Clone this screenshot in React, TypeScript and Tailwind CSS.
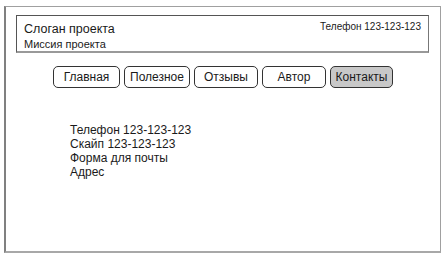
import React from 'react';

const menu = ['Главная', 'Полезное', 'Отзывы', 'Автор', 'Контакты'];
const widths = ['w-[67px]', 'w-[66px]', 'w-[64px]', 'w-[64px]', 'w-[63px]'];

export default function App() {
  return (
    <div className="w-[445px] h-[257px] bg-white pt-[6px] pl-[4px] font-['Liberation_Sans',Arial,sans-serif] text-[#1a1a1a]">
      {/* внешняя рамка страницы */}
      <div className="w-[437px] h-[247px] border-t border-r border-t-[#a0a0a0] border-r-[#a0a0a0] border-l-2 border-l-[#808080] border-b-2 border-b-[#a8a8a8] pl-[10px] pt-[8px]">
        {/* шапка */}
        <div className="w-[413px] h-[38px] border border-t-[#555] border-l-[#555] border-r-[#777] border-b-2 border-b-[#999] flex justify-between px-[7px]">
          <div className="pt-[6px]">
            <div className="text-[12.5px] leading-[15px]">Слоган проекта</div>
            <div className="text-[11px] leading-[12px] mt-[1px]">Миссия проекта</div>
          </div>
          <div className="text-[10px] leading-[12px] pt-[5px]">Телефон 123-123-123</div>
        </div>

        {/* меню */}
        <div className="flex gap-[4px] ml-[37px] mt-[13px]">
          {menu.map((item, i) => (
            <div
              key={item}
              className={`${widths[i]} h-[22px] border border-[#333] rounded-[5px] flex items-center justify-center text-[12px] ${
                item === 'Контакты' ? 'bg-[#c8c8c8]' : 'bg-white'
              }`}
            >
              {item}
            </div>
          ))}
        </div>

        {/* контакты */}
        <div className="ml-[54px] mt-[35px] text-[12px] leading-[14px]">
          <div>Телефон 123-123-123</div>
          <div>Скайп 123-123-123</div>
          <div>Форма для почты</div>
          <div>Адрес</div>
        </div>
      </div>
    </div>
  );
}
